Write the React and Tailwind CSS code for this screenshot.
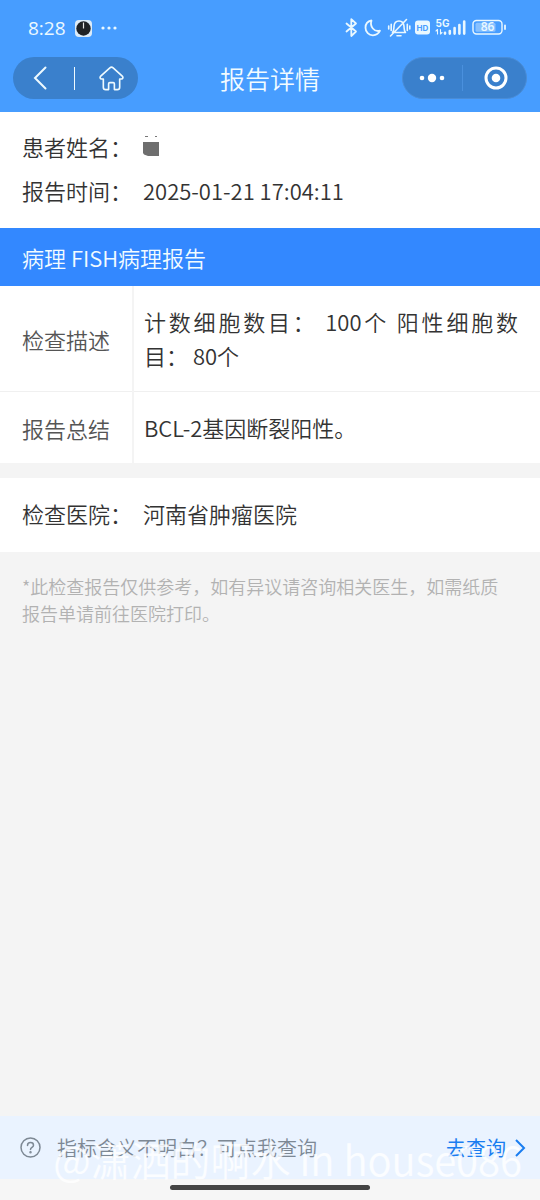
import React from 'react';

const patientInfo = [
    { label: '报告时间：', value: '2025-01-21 17:04:11' },
];

const reportRows = [
    { label: '检查描述', value: '计数细胞数目： 100个 阳性细胞数目： 80个' },
    { label: '报告总结', value: 'BCL-2基因断裂阳性。' },
];

const StatusBar = () => (
    <div className="flex h-14 items-center justify-between pr-[33px] pl-7 text-[#eaf8ff]">
        <div className="flex items-center gap-[9px]">
            <span className="font-['Open_Sans',sans-serif] text-[19px] leading-6 font-medium">8:28</span>
            <svg width="17" height="17" viewBox="0 0 17 17">
                <rect width="17" height="17" rx="4" fill="#dcebf8" />
                <circle cx="8.5" cy="8.5" r="7.2" fill="#1f2226" />
                <path d="M8.5 2.5v6" stroke="#e8e8e8" strokeWidth="1.2" />
            </svg>
            <svg width="16" height="4" viewBox="0 0 16 4" fill="currentColor">
                <circle cx="2" cy="2" r="1.6" />
                <circle cx="8" cy="2" r="1.6" />
                <circle cx="14" cy="2" r="1.6" />
            </svg>
        </div>
        <svg width="162" height="20" viewBox="0 0 162 20" fill="none" stroke="currentColor" strokeWidth="1.8" strokeLinecap="round" strokeLinejoin="round">
            {/* bluetooth */}
            <path d="M1.500 5.500l9.500 8-4.700 4.500V1.200L11 5.500l-9.500 8" />
            {/* moon */}
            <path d="M26.500 2.500C22.500 3.300 20.500 6.200 20.500 9.700c0 4.500 3.400 7.600 7.400 7.600 3.300 0 5.800-1.700 7.100-4.600-5.800 1.500-10.500-4-8.500-10.200z" />
            {/* muted bell */}
            <path d="M47.500 14.500c1.600-1.800 1.300-4 1.500-6.200.2-3.100 2-5.300 5-5.300s4.800 2.200 5 5.300c.2 2.200-.1 4.400 1.500 6.200zM52 17.800h4M45.500 18L61.500 1.500M46.200 6.200v6.300M43.700 8v3M62.300 6.200v6.300M64.800 8v3" strokeWidth="1.600" />
            {/* HD badge */}
            <rect x="70" y="2.500" width="15" height="14" rx="3" fill="currentColor" stroke="none" />
            <text x="77.500" y="12.500" textAnchor="middle" fill="#479dff" stroke="none" fontFamily="Inter, sans-serif" fontSize="8" fontWeight="700">HD</text>
            {/* signal */}
            <text x="90.500" y="8.500" fill="currentColor" stroke="none" fontFamily="Inter, sans-serif" fontSize="10" fontWeight="700">5G</text>
            <path d="M92.500 11.500v4.500M91 13l1.500-1.500M95.500 16v-4.500M95.500 16l1.500-1.500" strokeWidth="1.100" />
            <path d="M100 14.800v.8M104.800 13v2.600M109.600 10v5.600M114.400 7v8.600M119.200 3.500v12.100" strokeWidth="2.600" />
            {/* battery */}
            <rect x="128" y="2.500" width="29" height="13.500" rx="3.500" strokeWidth="1.400" />
            <rect x="130.500" y="4.800" width="20" height="9" rx="1.500" fill="currentColor" fillOpacity="0.4" stroke="none" />
            <path d="M160 7.500v3.500" strokeWidth="1.800" />
            <text x="142.500" y="13.300" textAnchor="middle" fill="currentColor" stroke="none" fontFamily="Open Sans, sans-serif" fontSize="12" fontWeight="600">86</text>
        </svg>
    </div>
);

const NavBar = () => (
    <div className="flex h-11 items-center justify-between px-[13px]">
        <div className="flex h-[42px] w-[125px] items-center rounded-full bg-[#3a80cc] text-[#eefaff]">
            <button type="button" aria-label="返回" className="flex h-full flex-1 items-center justify-center pr-2">
                <svg width="14" height="24" viewBox="0 0 14 24" fill="none" stroke="currentColor" strokeWidth="2" strokeLinecap="round">
                    <path d="M12.500 1.500L2 12l10.500 10.500" />
                </svg>
            </button>
            <span className="h-[23px] w-px bg-[#eefaff]" />
            <button type="button" aria-label="首页" className="flex h-full flex-1 items-center justify-center pl-[10px]">
                <svg width="25" height="25" viewBox="0 0 26 26" fill="none" stroke="currentColor" strokeWidth="1.700" strokeLinejoin="round" strokeLinecap="round">
                    <path d="M11.300 2L1.800 10.500c-1.200 1.200-.7 3 .9 3H4.500v8.500a2.500 2.500 0 0 0 2.500 2.500h3v-6a1.200 1.200 0 0 1 1.200-1.200h3.600a1.200 1.200 0 0 1 1.200 1.200v6h3a2.500 2.500 0 0 0 2.500-2.500v-8.500h1.800c1.600 0 2.100-1.800.9-3L14.700 2a2.500 2.500 0 0 0-3.400 0z" />
                </svg>
            </button>
        </div>
        <h1 className="text-[25px] leading-9 font-[350] text-[#f2fbff]">报告详情</h1>
        <div className="flex h-[42px] w-[125px] items-center rounded-full border border-[#4a8cd6] bg-[#3a80cc] text-white">
            <button type="button" aria-label="更多" className="flex h-full flex-1 items-center justify-center">
                <svg width="26" height="10" viewBox="0 0 26 10" fill="currentColor">
                    <circle cx="3" cy="5" r="2.300" />
                    <circle cx="13" cy="5" r="4.200" />
                    <circle cx="23" cy="5" r="2.300" />
                </svg>
            </button>
            <span className="h-[26px] w-px bg-[#4a90dd]" />
            <button type="button" aria-label="关闭" className="flex h-full flex-1 items-center justify-center pl-1">
                <svg width="24" height="24" viewBox="0 0 24 24">
                    <circle cx="12" cy="12" r="10" fill="none" stroke="currentColor" strokeWidth="3" />
                    <circle cx="12" cy="12" r="4.300" fill="currentColor" />
                </svg>
            </button>
        </div>
    </div>
);

const App = () => {
    return (
        <div lang="zh-CN" className="relative flex min-h-screen flex-col bg-[#f4f4f4] font-['Noto_Sans_CJK_SC',sans-serif] text-[22px] font-[350] text-[#333]">
            <header className="bg-[#479dff] pb-3">
                <StatusBar />
                <NavBar />
            </header>

            <main>
                <dl className="bg-white px-[22px] pt-3 pb-4 leading-[44px]">
                    <div className="flex gap-[11px]">
                        <dt className="w-[110px] shrink-0">患者姓名：</dt>
                        <dd className="flex items-center">
                            <svg width="16" height="20" viewBox="0 0 16 20" role="img" aria-label="姓名已隐藏">
                                <path d="M0 6h16v14H5L1 18.500 0 17z" fill="#6e6e6e" />
                                <path d="M2 .5h3M12 .5h2" stroke="#777" strokeWidth="1" />
                            </svg>
                        </dd>
                    </div>
                    {patientInfo.map((item) => (
                        <div key={item.label} className="flex gap-[11px]">
                            <dt className="w-[110px] shrink-0">{item.label}</dt>
                            <dd>{item.value}</dd>
                        </div>
                    ))}
                </dl>

                <h2 className="bg-[#3388ff] px-[22px] py-3 leading-[34px] font-[350] text-[#f2fbff]">病理 FISH病理报告</h2>

                <table className="w-full border-collapse bg-white leading-[34px]">
                    <tbody>
                        {reportRows.map((row) => (
                            <tr key={row.label} className="border-b border-[#f0f0f0] last:border-b-0">
                                <th scope="row" className="w-[133px] border-r-2 border-[#f4f4f4] pl-[22px] text-left font-[350] text-[#555]">{row.label}</th>
                                <td className="pt-[18px] pr-[22px] pb-[19px] pl-[10px] text-justify">{row.value}</td>
                            </tr>
                        ))}
                    </tbody>
                </table>

                <dl className="mt-[15px] flex gap-[11px] bg-white px-[22px] pt-[13px] pb-[17px] leading-[44px]">
                    <dt className="w-[110px] shrink-0">检查医院：</dt>
                    <dd>河南省肿瘤医院</dd>
                </dl>

                <p className="py-[21px] pr-[30px] pl-[22px] text-[18px] leading-[27px] text-[#b2b2b2]">
                    *此检查报告仅供参考，如有异议请咨询相关医生，如需纸质报告单请前往医院打印。
                </p>
            </main>

            <footer className="mt-auto">
                <div className="flex h-[63px] items-center bg-[#eaf3ff] pr-[14px] pl-5 text-[20px] text-[#7d8894]">
                    <svg width="21" height="21" viewBox="0 0 21 21" fill="none" stroke="currentColor" strokeWidth="1.500" strokeLinecap="round">
                        <circle cx="10.500" cy="10.500" r="9.500" />
                        <path d="M7.500 8.500c0-1.800 1.300-3 3-3s3 1.100 3 2.700c0 2.100-3 2.300-3 4.300" />
                        <circle cx="10.500" cy="15.300" r=".5" fill="currentColor" />
                    </svg>
                    <span className="ml-4">指标含义不明白？可点我查询</span>
                    <a href="#query" className="ml-auto flex items-center gap-2 font-normal text-[#1a7df0]">
                        去查询
                        <svg width="12" height="18" viewBox="0 0 12 18" fill="none" stroke="currentColor" strokeWidth="2">
                            <path d="M2 1l8 8-8 8" />
                        </svg>
                    </a>
                </div>
                <div className="flex h-[21px] items-center justify-center bg-[#f6f6f6] pb-1">
                    <span className="h-[5px] w-[200px] rounded-full bg-[#444]" />
                </div>
            </footer>

            {/* watermark */}
            <div className="pointer-events-none absolute right-[18px] bottom-3 text-[40px] leading-[58px] whitespace-nowrap text-white/80">
                @潇洒的啊水 in house086
            </div>
        </div>
    );
};

export default App;
